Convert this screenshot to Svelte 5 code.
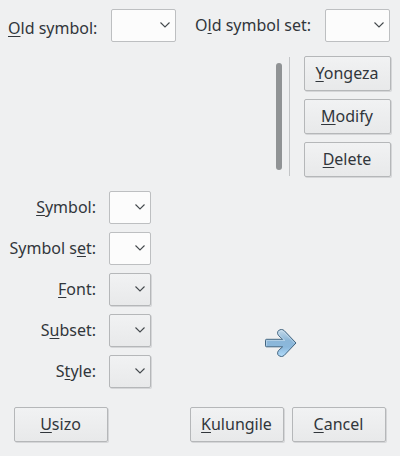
<script>
  const rows = [
    { pre: '', key: 'S', post: 'ymbol:', editable: true },
    { pre: 'Symbol s', key: 'e', post: 't:', editable: true },
    { pre: '', key: 'F', post: 'ont:', editable: false },
    { pre: 'S', key: 'u', post: 'bset:', editable: false },
    { pre: 'S', key: 't', post: 'yle:', editable: false }
  ];
  const actions = [['Y', 'ongeza'], ['M', 'odify'], ['D', 'elete']];
</script>

{#snippet chevron()}
  <svg class="chevron" width="12" height="8" viewBox="0 0 12 8"><path d="M1.5 1.5 L6 6 L10.5 1.5" /></svg>
{/snippet}

{#snippet push(key, rest)}
  <button class="push"><span><u>{key}</u>{rest}</span></button>
{/snippet}

<main class="dialog">
  <header class="top">
    <span class="label first"><u>O</u>ld symbol:</span>
    <div class="combo wide editable">{@render chevron()}</div>
    <span class="label second">O<u>l</u>d symbol set:</span>
    <div class="combo wide editable last">{@render chevron()}</div>
  </header>

  <section class="middle">
    <div class="scrollbar"></div>
    <div class="separator"></div>
    <div class="actions">
      {#each actions as [key, rest]}
        {@render push(key, rest)}
      {/each}
    </div>
  </section>

  <section class="fields">
    <div class="rows">
      {#each rows as row}
        <div class="row">
          <span class="label">{row.pre}<u>{row.key}</u>{row.post}</span>
          <div class="combo" class:editable={row.editable}>{@render chevron()}</div>
        </div>
      {/each}
    </div>
    <svg class="arrow" width="34" height="32" viewBox="0 0 34 32">
      <defs>
        <linearGradient id="arrowFill" x1="0" y1="0" x2="0" y2="1">
          <stop offset="0" stop-color="#c3d9e9" />
          <stop offset="0.4" stop-color="#8bb6d8" />
          <stop offset="0.65" stop-color="#8bb8dc" />
          <stop offset="1" stop-color="#b2dcfb" />
        </linearGradient>
      </defs>
      <path class="body" d="M2.5 12.3 H18.6 L14.6 8.6 Q13 6.8 13.8 4.6 Q15 2.4 17.4 2.5 Q19 2.5 20.2 3.6 L32 16 L20.2 28.4 Q19 29.5 17.4 29.5 Q15 29.6 13.8 27.4 Q13 25.2 14.6 23.4 L18.6 19.8 H2.5 Q1.5 19.8 1.5 18.8 V13.3 Q1.5 12.3 2.5 12.3 Z" />
      <path class="shine" d="M2.6 18.6 V13.4 H20.8 L15.4 8 Q14.2 6.4 15 4.8 Q17 2.6 19.4 4.4 L30.5 16" />
    </svg>
  </section>

  <footer class="bottom">
    {@render push('U', 'sizo')}
    <div class="confirm">
      {@render push('K', 'ulungile')}
      {@render push('C', 'ancel')}
    </div>
  </footer>
</main>

<style>
  :global(body) { background: #eff0f1; }
  .dialog {
    box-sizing: border-box;
    width: 400px;
    height: 456px;
    padding-top: 9px;
    display: flex;
    flex-direction: column;
    overflow: hidden;
    background: #eff0f1;
    color: #31363b;
    font: 16px/22px "Noto Sans", sans-serif;
  }
  u {
    text-decoration: underline;
    text-decoration-thickness: 1px;
    text-underline-offset: 2px;
    text-decoration-skip-ink: none;
  }
  .label { white-space: nowrap; }
  .top { display: flex; height: 33px; padding: 0 10px 0 8px; }
  .first { width: 103px; padding-top: 8px; }
  .second { margin-left: 19px; padding-top: 5px; }
  .last { margin-left: auto; }
  .combo {
    box-sizing: border-box;
    flex: none;
    width: 42px;
    height: 33px;
    padding-right: 4px;
    display: flex;
    align-items: center;
    justify-content: flex-end;
    border: 1px solid #b5b7b9;
    border-radius: 2px;
    background: linear-gradient(#f1f2f3, #e8e9ea);
    box-shadow: 1px 1px 0 #d5d6d8;
  }
  .combo.editable { background: #fcfcfc; border-color: #bdbfc1; box-shadow: none; }
  .wide { width: 65px; }
  .chevron { margin-bottom: 1px; }
  .chevron path { fill: none; stroke: #44494d; stroke-width: 1.1; }
  .middle { display: flex; height: 121px; margin-top: 14px; padding-left: 276px; }
  .scrollbar { width: 6px; height: 107px; margin-top: 7px; border-radius: 3px; background: #909395; }
  .separator { width: 1px; height: 119px; margin: 1px 14px 0 7px; background: #c3c5c7; }
  .actions { display: flex; flex-direction: column; gap: 8px; }
  .push {
    box-sizing: border-box;
    width: 87px;
    height: 35px;
    padding: 0 1px 2px 0;
    display: flex;
    align-items: center;
    justify-content: center;
    border: 1px solid #b5b7b9;
    border-radius: 2px;
    background: linear-gradient(#f1f2f3, #e8e9ea);
    box-shadow: 1px 1px 0 #d5d6d8;
    color: inherit;
    font: inherit;
  }
  .fields { display: flex; height: 197px; margin-top: 14px; }
  .rows { display: flex; flex-direction: column; gap: 8px; width: 151px; }
  .row { display: flex; align-items: center; justify-content: flex-end; gap: 13px; }
  .row .label { padding-bottom: 2px; }
  .arrow { margin: 136px 0 0 113px; }
  .body { fill: url(#arrowFill); stroke: #42647f; stroke-width: 1; stroke-linejoin: round; }
  .shine { fill: none; stroke: #d5e8f5; stroke-width: 0.8; opacity: 0.7; }
  .bottom { display: flex; justify-content: space-between; margin-top: 19px; padding: 0 14px; }
  .bottom .push { width: 94px; }
  .confirm { display: flex; gap: 8px; }
  .actions .push { flex: none; }
</style>
